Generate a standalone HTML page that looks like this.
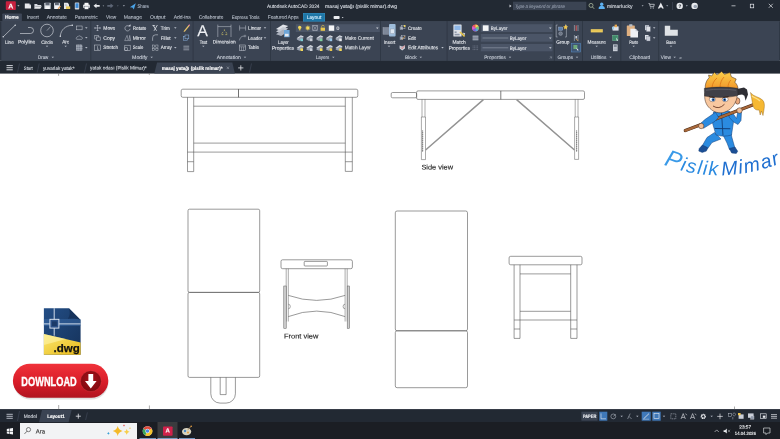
<!DOCTYPE html>
<html lang="tr"><head><meta charset="utf-8"><title>masaj yatağı (pislik mimar).dwg - Autodesk AutoCAD 2024</title>
<style>
html,body{margin:0;padding:0;background:#fff;}
body{width:780px;height:439px;position:relative;overflow:hidden;font-family:"Liberation Sans", sans-serif;}
svg.ov{position:absolute;left:0;top:0;width:780px;height:439px;overflow:visible;}
svg text{font-family:"Liberation Sans", sans-serif;}
</style></head><body>
<!--BARS-->
<svg class="ov" viewBox="0 0 780 439">
<rect x="0.00" y="0.00" width="780.00" height="21.50" fill="#222933"/>
<rect x="0.00" y="21.10" width="780.00" height="39.70" fill="#2c3440"/>
<rect x="1.30" y="21.10" width="778.00" height="39.70" fill="#3b4453"/>
<rect x="0.00" y="60.80" width="780.00" height="12.80" fill="#222933"/>
<rect x="0.00" y="409.10" width="780.00" height="13.00" fill="#222933"/>
<rect x="0.00" y="422.00" width="780.00" height="17.00" fill="#1b1e24"/>
<rect x="5.80" y="1.30" width="10.00" height="8.80" fill="#c8203f" rx="0.8"/>
<rect x="513.00" y="1.70" width="73.30" height="8.40" fill="#3b4453"/>
<rect x="2.30" y="13.40" width="19.60" height="8.00" fill="#3e4757" rx="0.8"/>
<rect x="303.00" y="13.00" width="22.00" height="8.50" fill="#3a94c4"/>
<rect x="303.40" y="13.40" width="21.20" height="7.90" fill="#1e76a6"/>
<rect x="333.60" y="15.90" width="6.00" height="3.20" fill="#e8eaee" rx="0.8"/>
<rect x="90.50" y="21.00" width="0.70" height="40.00" fill="#2c3440"/>
<rect x="192.70" y="21.00" width="0.70" height="40.00" fill="#2c3440"/>
<rect x="270.00" y="21.00" width="0.70" height="40.00" fill="#2c3440"/>
<rect x="380.00" y="21.00" width="0.70" height="40.00" fill="#2c3440"/>
<rect x="446.70" y="21.00" width="0.70" height="40.00" fill="#2c3440"/>
<rect x="553.90" y="21.00" width="0.70" height="40.00" fill="#2c3440"/>
<rect x="582.20" y="21.00" width="0.70" height="40.00" fill="#2c3440"/>
<rect x="620.50" y="21.00" width="0.70" height="40.00" fill="#2c3440"/>
<rect x="658.40" y="21.00" width="0.70" height="40.00" fill="#2c3440"/>
<rect x="295.80" y="24.20" width="84.00" height="7.80" fill="#4b5567"/>
<rect x="328.80" y="25.40" width="5.40" height="5.40" fill="#f4f5f7"/>
<rect x="480.80" y="24.20" width="71.70" height="7.80" fill="#4b5567"/>
<rect x="482.80" y="25.30" width="5.80" height="5.60" fill="#f4f5f7"/>
<rect x="480.80" y="34.00" width="71.70" height="7.70" fill="#4b5567"/>
<rect x="480.80" y="44.00" width="71.70" height="7.30" fill="#4b5567"/>
<rect x="581.40" y="411.70" width="16.20" height="9.00" fill="#3b4453"/>
<rect x="599.30" y="411.70" width="8.00" height="9.00" fill="#3f78b8"/>
<rect x="641.70" y="411.70" width="9.00" height="9.00" fill="#3f78b8"/>
<rect x="652.30" y="411.70" width="8.40" height="9.00" fill="#3f78b8"/>
<rect x="20.00" y="423.00" width="117.00" height="16.00" fill="#f2f3f5"/>
<rect x="157.50" y="422.00" width="20.00" height="17.00" fill="#3a3b3e"/>
<rect x="163.00" y="426.40" width="9.60" height="9.40" fill="#d0214a" rx="0.8"/>
<rect x="139.50" y="438.20" width="16.50" height="0.80" fill="#8ab4e8"/>
<rect x="157.50" y="438.20" width="20.00" height="0.80" fill="#8ab4e8"/>
<rect x="179.00" y="438.20" width="16.00" height="0.80" fill="#8ab4e8"/>
</svg>
<svg class="ov" viewBox="0 0 780 439">
<path d="M17.3 5.2h2.2l-1.1 1.3z" fill="#cfd3da"/>
<path d="M24.8 3.4h4.4l1.800 1.800v3.200h-6.200z" fill="#e6e8ec"/><path d="M29.200 3.400v1.800h1.800" fill="#aab0bc"/>
<path d="M34.400 4h2.600l.8.900h3.400v1h-5.200l-1.600 2.600z" fill="#d8dbe2"/><path d="M35.600 6.200h6.200l-1.500 2.600h-6.200z" fill="#e6e8ec"/>
<rect x="44.300" y="2.800" width="6.400" height="6.200" rx=".5" fill="#cfd4dc"/><rect x="45.500" y="2.800" width="4" height="2.400" fill="#3a4352" opacity=".75"/><rect x="45.300" y="6.200" width="4.400" height="2.800" fill="#f4f5f7"/>
<rect x="54" y="2.800" width="6" height="6.200" rx=".5" fill="#cfd4dc"/><rect x="55" y="2.800" width="3.800" height="2.200" fill="#3a4352" opacity=".75"/><rect x="55" y="6" width="4" height="3" fill="#f4f5f7"/><path d="M58 8.800l2.600-2.600" stroke="#e89a4a" stroke-width="1.100"/>
<path d="M64 2.800h3.600l1.400 1.400v4.800h-5z" fill="#e6e8ec"/><rect x="66" y="6.400" width="4.200" height="2.600" fill="#e8c85a"/><path d="M64.800 4.400h2M64.800 5.600h2.600" stroke="#8f98a8" stroke-width=".4"/>
<rect x="74.800" y="2.400" width="4.400" height="7" rx=".7" fill="#cfd4dc"/><rect x="75.500" y="3.300" width="3" height="4.600" fill="#3a8ad8"/>
<rect x="83.200" y="4.600" width="6.600" height="3.400" rx=".7" fill="#e6e8ec"/><rect x="84.500" y="2.800" width="4" height="2.200" fill="#f4f5f7"/><rect x="84.500" y="6.600" width="4" height="2.600" fill="#f4f5f7" stroke="#3a4352" stroke-width=".3"/>
<path d="M93.5 5.8l3-2.2v1.4h3.2v1.8h-3.2v1.4z" fill="#e8eaee"/>
<path d="M102.6 5.4h1.6l-.8 1z" fill="#aab0bb"/>
<path d="M113.5 5.8l-3-2.2v1.4h-3.2v1.8h3.2v1.4z" fill="#5d6676"/>
<path d="M117 5.4h1.6l-.8 1z" fill="#6d7686"/>
<path d="M122.8 5.2h2.2l-1.1 1.3z" fill="#aab0bb"/>
<path d="M129.8 7.2l6-4-2 6.2-1.4-1.9z" fill="#4aa3e8"/>
<path d="M509.5 4.6l2 1.4-2 1.4z" fill="#cfd3da"/>
<circle cx="591" cy="5.4" r="2" fill="none" stroke="#b9c7a8" stroke-width="0.7"/><path d="M592.4 6.9l1.8 1.9" stroke="#b9c7a8" stroke-width="0.8"/>
<circle cx="601.7" cy="4.2" r="1.7" fill="#5db0f0"/><path d="M598.6 9c0-2.6 1.3-3.2 3.1-3.2s3.1.6 3.1 3.2z" fill="#5db0f0"/>
<path d="M641.6 5.2h2l-1 1.2z" fill="#aab0bb"/>
<path d="M648.5 3.5h1l.8 3.2h3.4l.6-2.4h-4.4" fill="none" stroke="#dfe2e8" stroke-width="0.7"/><circle cx="650.8" cy="8" r=".6" fill="#dfe2e8"/><circle cx="653.3" cy="8" r=".6" fill="#dfe2e8"/>
<path d="M660.8 2.6l3 6h-1.6l-.5-1.2h-1.8l-.5 1.2h-1.6z" fill="#e8eaee"/>
<path d="M666.2 5.2h2l-1 1.2z" fill="#aab0bb"/>
<path d="M672.5 2v8" stroke="#4a5364" stroke-width="0.5"/>
<circle cx="679.7" cy="5.9" r="3.2" fill="#e8eaee"/>
<path d="M685.8 5.2h2l-1 1.2z" fill="#aab0bb"/>
<circle cx="694.6" cy="5.9" r="3.2" fill="#e8eaee"/><circle cx="695.3" cy="6.5" r="1.8" fill="#9aa3b2"/>
<path d="M731.5 5.8h4" stroke="#e8eaee" stroke-width="0.7"/>
<rect x="750.3" y="4.2" width="3.4" height="3.6" fill="none" stroke="#e8eaee" stroke-width="0.7"/>
<path d="M768.8 3.8l4 4m0-4l-4 4" stroke="#e8eaee" stroke-width="0.7"/>
<path d="M341.700 17.100h1.900l-.950 1.150z" fill="#cfd3da"/>
<path d="M51.55 56.71h2.50l-1.25 1.38z" fill="#b8bec9"/>
<path d="M150.45 56.71h2.50l-1.25 1.38z" fill="#b8bec9"/>
<path d="M243.75 56.71h2.50l-1.25 1.38z" fill="#b8bec9"/>
<path d="M332.05 56.71h2.50l-1.25 1.38z" fill="#b8bec9"/>
<path d="M419.55 56.71h2.50l-1.25 1.38z" fill="#b8bec9"/>
<path d="M508.75 56.71h2.50l-1.25 1.38z" fill="#b8bec9"/>
<path d="M575.75 56.71h2.50l-1.25 1.38z" fill="#b8bec9"/>
<path d="M609.25 56.71h2.50l-1.25 1.38z" fill="#b8bec9"/>
<path d="M673.45 56.71h2.50l-1.25 1.38z" fill="#b8bec9"/>
<path d="M549.8 58.6l1.8-1.8m0 1.8v-1.8h-1.8" stroke="#aab0bb" stroke-width="0.4" fill="none"/>
<path d="M3.2 36.8L15.2 25.2" stroke="#dfe3ea" stroke-width="0.6"/><circle cx="3.2" cy="36.8" r=".7" fill="#dfe3ea"/><circle cx="15.2" cy="25.2" r=".7" fill="#dfe3ea"/>
<path d="M20 33.5h10.5a3 3 0 0 0 0-6h-2.5" stroke="#dfe3ea" stroke-width="0.6" fill="none"/>
<circle cx="47" cy="30.5" r="6.3" stroke="#dfe3ea" stroke-width="0.6" fill="none"/><path d="M47 30.5l3.5-3.8" stroke="#dfe3ea" stroke-width="0.5"/>
<path d="M45.75 45.71h2.50l-1.25 1.38z" fill="#b8bec9"/>
<path d="M60.3 36.2c.6-6.5 5-10.5 12-11" stroke="#dfe3ea" stroke-width="0.6" fill="none"/><circle cx="60.3" cy="36.2" r=".7" fill="#dfe3ea"/><circle cx="72.3" cy="25.2" r=".7" fill="#dfe3ea"/>
<path d="M64.45 45.71h2.50l-1.25 1.38z" fill="#b8bec9"/>
<rect x="76.5" y="26" width="5.6" height="3.8" stroke="#c9ced8" stroke-width="0.5" fill="none"/>
<path d="M85.05 27.31h2.50l-1.25 1.38z" fill="#b8bec9"/>
<path d="M76.6 39.3a1.6 1.6 0 0 1 1.2-2.6 1.8 1.8 0 0 1 3.2.2 1.3 1.3 0 0 1 .8 2.4z" stroke="#c9ced8" stroke-width="0.5" fill="none"/>
<path d="M85.05 37.11h2.50l-1.25 1.38z" fill="#b8bec9"/>
<rect x="76.7" y="45" width="5.2" height="5.2" stroke="#c9ced8" stroke-width="0.5" fill="#6d7686"/><path d="M76 46.6h6.6M76 48.6h6.6M78.2 44.4v6.4M80.4 44.4v6.4" stroke="#c9ced8" stroke-width="0.35"/>
<path d="M85.05 47.11h2.50l-1.25 1.38z" fill="#b8bec9"/>
<path d="M97.5 25.0v6M94.5 28.0h6M96.5 26.0l1-1 1 1M96.5 30.0l1 1 1-1M95.5 27.0l-1 1 1 1M99.5 27.0l1 1-1 1" stroke="#c9ced8" stroke-width="0.55" fill="none"/>
<rect x="94.8" y="35.4" width="3.6" height="3.6" stroke="#c9ced8" stroke-width="0.5" fill="none"/><rect x="96.6" y="37" width="3.6" height="3.6" stroke="#c9ced8" stroke-width="0.5" fill="#3b4453"/>
<rect x="94.6" y="45" width="5.8" height="5.6" stroke="#c9ced8" stroke-width="0.5" fill="none"/><path d="M97.5 46.2v3.4l1.6-.6" stroke="#c9ced8" stroke-width="0.5" fill="none"/>
<path d="M129.8 27.0a2.6 2.6 0 1 0 .3 1.8" stroke="#c9ced8" stroke-width="0.6" fill="none"/><path d="M128.5 25.2l1.8 1.6 .6-2.2z" fill="#c9ced8"/>
<path d="M124.7 40.6l2.4-5.2 1.2 5.2zM128.9 40.6l.8-5.2 1 5.2z" stroke="#c9ced8" stroke-width="0.45" fill="none"/>
<rect x="124.8" y="45.2" width="5.4" height="5.2" stroke="#c9ced8" stroke-width="0.5" fill="none"/><rect x="124.8" y="47.8" width="2.8" height="2.6" stroke="#c9ced8" stroke-width="0.5" fill="none"/>
<path d="M153 25.2l3.6 5.6M157.4 25l-3.4 5.8M152.6 25.4l2.6.4" stroke="#e0e3ea" stroke-width="0.8" fill="none"/>
<path d="M174.05 27.31h2.50l-1.25 1.38z" fill="#b8bec9"/>
<path d="M152.6 40.8v-3a3 3 0 0 1 3-3h2.4" stroke="#c9ced8" stroke-width="0.6" fill="none"/>
<path d="M174.05 37.31h2.50l-1.25 1.38z" fill="#b8bec9"/>
<g stroke="#c9ced8" stroke-width="0.45" fill="none"><rect x="152.4" y="45" width="2.2" height="2.2"/><rect x="155.8" y="45" width="2.2" height="2.2"/><rect x="152.4" y="48.4" width="2.2" height="2.2"/><rect x="155.8" y="48.4" width="2.2" height="2.2"/></g>
<path d="M174.05 47.11h2.50l-1.25 1.38z" fill="#b8bec9"/>
<path d="M184 30.8l4.6-5.8 1 .8-4.6 5.8-1.4.4z" fill="#e9c46a"/><path d="M188.2 25.4l1-1.2 1 .8-1 1.2z" fill="#e07a9a"/>
<rect x="183.6" y="36.4" width="3.8" height="3.8" stroke="#8fb8e8" stroke-width="0.5" fill="none"/><rect x="185" y="35" width="3.8" height="3.8" stroke="#8fb8e8" stroke-width="0.5" fill="#3b4453"/>
<path d="M183.4 46.2h5.8M183.4 48h5.8M183.4 49.8h5.8" stroke="#c9ced8" stroke-width="0.6"/>
<path d="M202.05 45.71h2.50l-1.25 1.38z" fill="#b8bec9"/>
<path d="M217.8 24.6v12.4M231 24.6v12.4M217.8 26.6h13.2" stroke="#c9ced8" stroke-width="0.5" fill="none"/><path d="M221.6 33.4l1.6-1.2M224.4 31v-1.6M227.2 33.4l-1.6-1.2M221.6 34.6h1.8M225.4 34.6h1.8" stroke="#e6d96a" stroke-width="0.6"/>
<path d="M239.6 25.4v5.2M245.6 25.4v5.2M239.6 28h6" stroke="#c9ced8" stroke-width="0.5" fill="none"/>
<path d="M263.75 27.31h2.50l-1.25 1.38z" fill="#b8bec9"/>
<path d="M239.4 40.4c1-3.6 2.6-4.4 5-4.2" stroke="#c9ced8" stroke-width="0.5" fill="none"/><circle cx="245" cy="36" r=".9" fill="none" stroke="#c9ced8" stroke-width="0.4"/>
<path d="M263.75 37.31h2.50l-1.25 1.38z" fill="#b8bec9"/>
<rect x="239.4" y="45" width="6.2" height="5.6" stroke="#c9ced8" stroke-width="0.5" fill="none"/><path d="M239.4 46.8h6.2M241.5 46.8v3.8M243.5 46.8v3.8" stroke="#c9ced8" stroke-width="0.4"/>
<g><path d="M276 29l7-4.6 5.2 1.6-7 4.8z" fill="#dfe2e8"/><path d="M276 31.6l7-4.6 5.2 1.6-7 4.8z" fill="#c3c8d2"/><path d="M276 34.2l7-4.6 5.2 1.6-7 4.8z" fill="#aab0bc"/><rect x="284" y="30" width="5.6" height="7.2" fill="#6ea6d8"/><rect x="285" y="33.8" width="3.6" height="2.6" fill="#e8eaee"/></g>
<circle cx="299.7" cy="27.4" r="1.7" fill="#f2d85c"/><rect x="298.9" y="28.8" width="1.6" height="1.6" fill="#d8c050"/>
<circle cx="307.8" cy="28" r="1.7" fill="#f2d85c"/><path d="M307.8 25.2v5.6M305 28h5.6M305.8 26l4 4M309.8 26l-4 4" stroke="#f2d85c" stroke-width="0.4"/>
<rect x="312.8" y="25.4" width="4.4" height="5.2" fill="none" stroke="#c9ced8" stroke-width="0.5"/><path d="M313 25.6l4 5M317 25.6l-4 5" stroke="#c9ced8" stroke-width="0.4"/>
<rect x="320.6" y="27.6" width="4.4" height="3.2" fill="#e9c84e"/><path d="M321.6 27.6v-1a1.3 1.3 0 0 1 2.6 0" stroke="#e9c84e" stroke-width="0.6" fill="none"/>
<path d="M376.05 27.51h2.50l-1.25 1.38z" fill="#cfd3da"/>
<path d="M296.6 38.2l4.200-3 3 1.200-4.200 3.200z" fill="#d5d9e0"/><path d="M296.6 39.6l4.200-3 3 1.200-4.200 3.200z" fill="#9aa2b0"/>
<rect x="300.4" y="38.6" width="2.600" height="2.600" fill="#7fd0d8"/>
<path d="M306.1 38.2l4.200-3 3 1.200-4.200 3.200z" fill="#d5d9e0"/><path d="M306.1 39.6l4.200-3 3 1.200-4.200 3.200z" fill="#9aa2b0"/>
<rect x="309.9" y="38.6" width="2.600" height="2.600" fill="#c9ced8"/>
<path d="M316.1 38.2l4.200-3 3 1.200-4.200 3.200z" fill="#d5d9e0"/><path d="M316.1 39.6l4.200-3 3 1.200-4.200 3.200z" fill="#9aa2b0"/>
<rect x="319.9" y="38.6" width="2.600" height="2.600" fill="#7fd0a0"/>
<path d="M325.8 38.2l4.200-3 3 1.200-4.200 3.200z" fill="#d5d9e0"/><path d="M325.8 39.6l4.200-3 3 1.200-4.200 3.200z" fill="#9aa2b0"/>
<rect x="329.6" y="38.6" width="2.600" height="2.600" fill="#9ac8ea"/>
<path d="M335.4 38.2l4.200-3 3 1.200-4.200 3.200z" fill="#d5d9e0"/><path d="M335.4 39.6l4.200-3 3 1.200-4.200 3.200z" fill="#9aa2b0"/>
<rect x="339.2" y="38.6" width="2.600" height="2.600" fill="#e8eaee"/>
<path d="M296.6 48.0l4.200-3 3 1.200-4.200 3.200z" fill="#d5d9e0"/><path d="M296.6 49.4l4.200-3 3 1.200-4.200 3.200z" fill="#9aa2b0"/>
<rect x="300.4" y="48.4" width="2.600" height="2.600" fill="#f2d85c"/>
<path d="M306.1 48.0l4.200-3 3 1.200-4.200 3.200z" fill="#d5d9e0"/><path d="M306.1 49.4l4.200-3 3 1.200-4.200 3.200z" fill="#9aa2b0"/>
<rect x="309.9" y="48.4" width="2.600" height="2.600" fill="#c9ced8"/>
<path d="M316.1 48.0l4.200-3 3 1.200-4.200 3.200z" fill="#d5d9e0"/><path d="M316.1 49.4l4.200-3 3 1.200-4.200 3.200z" fill="#9aa2b0"/>
<rect x="319.9" y="48.4" width="2.600" height="2.600" fill="#f2d85c"/>
<path d="M325.8 48.0l4.200-3 3 1.200-4.200 3.200z" fill="#d5d9e0"/><path d="M325.8 49.4l4.200-3 3 1.200-4.200 3.200z" fill="#9aa2b0"/>
<rect x="329.6" y="48.4" width="2.600" height="2.600" fill="#e9c84e"/>
<path d="M335.4 48.0l4.200-3 3 1.200-4.200 3.200z" fill="#d5d9e0"/><path d="M335.4 49.4l4.200-3 3 1.200-4.200 3.200z" fill="#9aa2b0"/>
<rect x="339.2" y="48.4" width="2.600" height="2.600" fill="#f2d85c"/>
<rect x="383" y="27.6" width="9.6" height="6.6" fill="#7d8798" stroke="#aab0bc" stroke-width="0.4"/><rect x="389" y="24" width="6.6" height="12.4" rx="1" fill="#a9c9e8" opacity="0.9"/><rect x="390.2" y="29" width="4.2" height="4.6" fill="#dfe8f2" stroke="#6d7686" stroke-width="0.3"/>
<path d="M387.75 45.71h2.50l-1.25 1.38z" fill="#b8bec9"/>
<rect x="399.8" y="26.6" width="3.2" height="3.2" fill="#8f98a8"/><rect x="401.6" y="25.4" width="3.4" height="3.4" fill="none" stroke="#c9ced8" stroke-width="0.4"/><circle cx="404.6" cy="26" r="1" fill="#f2d85c"/>
<rect x="399.8" y="36.6" width="3.2" height="3.2" fill="#8f98a8"/><rect x="401.6" y="35.4" width="3.4" height="3.4" fill="none" stroke="#c9ced8" stroke-width="0.4"/><path d="M402 39.6l3-3.6" stroke="#e9a84e" stroke-width="0.7"/>
<path d="M399.6 45.4l2.6 1.2 2.8-1.4v3.2l-2.8 2.2-2.6-2z" fill="#c9ced8"/><path d="M401 47.4l1.2 1.2 2.4-3" stroke="#e05a5a" stroke-width="0.7" fill="none"/>
<path d="M441.25 47.11h2.50l-1.25 1.38z" fill="#b8bec9"/>
<rect x="453.4" y="24.4" width="8.2" height="12.2" rx=".6" fill="#dfe2e8"/><rect x="454.4" y="25.6" width="6.2" height="4.4" fill="#8fb8e8"/><rect x="454.6" y="31.4" width="2" height="1.6" fill="#8f98a8"/><rect x="454.6" y="33.8" width="5" height="1.6" fill="#8f98a8"/><path d="M460 32l4.6 4.4" stroke="#e9c84e" stroke-width="1.6"/><path d="M462.6 32.4l2.6 1-.6 1.6z" fill="#f4f5f7"/>
<circle cx="475.5" cy="28" r="3.4" fill="#e85a5a"/><path d="M475.5 28v-3.4a3.4 3.4 0 0 1 3 1.7z" fill="#f2d85c"/><path d="M475.5 28l3-1.7a3.4 3.4 0 0 1 0 3.4z" fill="#6ad07a"/><path d="M475.5 28l3 1.7a3.4 3.4 0 0 1-3 1.7z" fill="#4ab0e8"/><path d="M475.5 28v3.4a3.4 3.4 0 0 1-3-1.7z" fill="#6a6ae8"/><path d="M475.5 28l-3 1.7a3.4 3.4 0 0 1 0-3.4z" fill="#d85ad8"/>
<path d="M549.05 27.51h2.50l-1.25 1.38z" fill="#cfd3da"/>
<path d="M482.5 38h25.8" stroke="#aab0bc" stroke-width="0.5"/>
<path d="M549.05 37.51h2.50l-1.25 1.38z" fill="#cfd3da"/>
<path d="M482.5 47.8h25.8" stroke="#aab0bc" stroke-width="0.5"/>
<path d="M549.05 47.31h2.50l-1.25 1.38z" fill="#cfd3da"/>
<rect x="472.6" y="35.2" width="5.8" height="5.4" fill="#6d7686"/><path d="M472.6 36.4h5.8M472.6 38h5.8M472.6 39.6h5.8" stroke="#c9ced8" stroke-width="0.5"/>
<path d="M472.6 46h5.8M472.6 47.8h5.8M472.6 49.6h5.8" stroke="#8f98a8" stroke-width="0.5" stroke-dasharray="1 .5"/>
<path d="M557.6 25h-1.4v12h1.4M565 25h1.4v12h-1.4" stroke="#c9ced8" stroke-width="0.5" fill="none"/><rect x="558.4" y="27" width="4.4" height="3.4" fill="#5a7fae" stroke="#c9ced8" stroke-width="0.3"/><circle cx="560.6" cy="33.6" r="1.9" fill="#6d7686" stroke="#c9ced8" stroke-width="0.3"/><path d="M565.6 24.4l.8 1.8 1.8.4-1.4 1.2.4 1.8-1.6-1-1.6 1 .4-1.8-1.4-1.2 1.8-.4z" fill="#f2c84e"/>
<path d="M574.4 25v6M578 25v6" stroke="#c9ced8" stroke-width="0.5"/><path d="M576.2 25.4v5.4" stroke="#e05a5a" stroke-width="1"/>
<path d="M574.4 35v6M578 35v6" stroke="#c9ced8" stroke-width="0.5"/><path d="M575.4 36h1.6v2.6h-1.6z" fill="#c9ced8"/><path d="M576.2 39.2l2 1.6" stroke="#e9a84e" stroke-width="0.8"/>
<rect x="571.4" y="43.2" width="9.2" height="8.8" fill="#3f5674" stroke="#5a8fc8" stroke-width="0.5"/><rect x="573.4" y="45" width="4" height="4" fill="#6ea87a"/><path d="M576 47.4l2.8 2.8-1.4.2z" fill="#f4f5f7"/>
<rect x="590.8" y="29.2" width="12" height="3.2" fill="#f2d060"/><path d="M590.8 30.8h12" stroke="#c8a840" stroke-width="0.4"/>
<path d="M595.45 45.71h2.50l-1.25 1.38z" fill="#b8bec9"/>
<rect x="612.6" y="26.4" width="6" height="4.2" fill="#dfe2e8"/><rect x="614.6" y="24.6" width="2.4" height="2.6" fill="#e9a84e"/><rect x="612" y="27" width="1.8" height="2.4" fill="#8fc8ea"/>
<rect x="612.6" y="35.2" width="5.4" height="5.4" fill="#3f8a6a" stroke="#7fc8a0" stroke-width="0.4"/><path d="M616 37.6l2.2 3-1.4.1z" fill="#f4f5f7"/>
<rect x="613" y="44.4" width="4.6" height="6.8" fill="#c9ced8"/><rect x="613.8" y="45.2" width="3" height="1.6" fill="#6d7686"/><path d="M613.8 48h3M613.8 49.4h3" stroke="#6d7686" stroke-width="0.5" stroke-dasharray=".7 .4"/>
<rect x="626.8" y="25.4" width="8" height="10.6" rx=".6" fill="#e0b080"/><rect x="629.2" y="24.2" width="3.2" height="2.2" rx=".4" fill="#b8bec8"/><path d="M630.4 28.8h5.2l2.4 2.4v6.2h-7.6z" fill="#eef0f4"/><path d="M635.6 28.8v2.4h2.4z" fill="#c3c8d2"/>
<path d="M632.45 45.71h2.50l-1.25 1.38z" fill="#b8bec9"/>
<rect x="645" y="25.2" width="4" height="5" fill="#c9ced8"/><rect x="646.4" y="26.6" width="4" height="5" fill="#dfe2e8" stroke="#6d7686" stroke-width="0.3"/>
<path d="M652.95 27.31h2.50l-1.25 1.38z" fill="#b8bec9"/>
<rect x="645" y="35" width="3.6" height="4.6" fill="#dfe2e8"/><rect x="646.6" y="36.4" width="3.6" height="4.6" fill="#c9ced8" stroke="#6d7686" stroke-width="0.3"/>
<path d="M652.95 37.31h2.50l-1.25 1.38z" fill="#b8bec9"/>
<path d="M664.8 25.8h5.4v4h7.6v6h-13z" fill="#dfe2e6"/>
<path d="M669.75 45.71h2.50l-1.25 1.38z" fill="#b8bec9"/>
<path d="M6.5 65.6h6.300M6.5 67.700h6.300M6.5 69.800h6.300" stroke="#e4e7ec" stroke-width="0.9"/>
<path d="M17.5 72.5l2-9M37.2 72.5l2-9M84.5 72.5l2-9" stroke="#4a5364" stroke-width="0.5"/>
<path d="M154.3 73.6l2.8-11.2h75.2l2.6 11.2z" fill="#3b4453"/>
<path d="M226.8 66.6l2.2 2.4m0-2.4l-2.2 2.4" stroke="#aab0bb" stroke-width="0.5"/>
<path d="M238.2 67.9h5.2m-2.6-2.6v5.2" stroke="#e8eaee" stroke-width="0.8"/>
<path d="M249.5 72.5l2-9" stroke="#4a5364" stroke-width="0.5"/>
<path d="M6.5 414.300h6.300M6.5 416.300h6.300M6.5 418.300h6.300" stroke="#c9ced8" stroke-width="0.85"/>
<path d="M17.5 421l2-10" stroke="#4a5364" stroke-width="0.5"/>
<path d="M39 422.2l3-12.2h29.6l-3 12.2z" fill="#3b4453"/>
<path d="M75.8 416.2h5m-2.5-2.5v5" stroke="#e8eaee" stroke-width="0.8"/>
<path d="M85.6 420l1.8-7.6" stroke="#4a5364" stroke-width="0.5"/>
<path d="M601 413.4v5.4h5" stroke="#e8eaee" stroke-width="0.6" fill="none"/>
<circle cx="613.3" cy="416.4" r="2.4" stroke="#c9ced8" stroke-width="0.5" fill="none"/><path d="M613.3 416.4l2.4-2" stroke="#c9ced8" stroke-width="0.5"/>
<path d="M620.45 415.71h2.50l-1.25 1.38z" fill="#b8bec9"/>
<path d="M627.6 419l2.6-5.4M629 416.4l2.6 2.6" stroke="#c9ced8" stroke-width="0.5" fill="none"/>
<path d="M636.05 415.71h2.50l-1.25 1.38z" fill="#b8bec9"/>
<path d="M643.4 419l5.6-5.4" stroke="#e8eaee" stroke-width="0.8"/><path d="M643.4 419.2h5.6" stroke="#e8eaee" stroke-width="0.4"/>
<rect x="654" y="413.6" width="5" height="5" stroke="#e8eaee" stroke-width="0.6" fill="none"/>
<path d="M662.75 415.71h2.50l-1.25 1.38z" fill="#b8bec9"/>
<rect x="670.8" y="413.8" width="5" height="5" stroke="#c9ced8" stroke-width="0.5" fill="none" stroke-dasharray="1.2 .6"/>
<path d="M681 419l2.2-5.4 2.2 5.4M681.8 417.4h2.8M685.6 413.6l1.2 1.6" stroke="#e8eaee" stroke-width="0.6" fill="none"/>
<path d="M690.4 419l2.2-5.4 2.2 5.4M691.2 417.4h2.8M695 413.6l1.2 1.6" stroke="#e8eaee" stroke-width="0.6" fill="none"/>
<circle cx="703.3" cy="416.4" r="2" stroke="#e8eaee" stroke-width="1.3" fill="none" stroke-dasharray="1 .57"/><circle cx="703.3" cy="416.4" r="1.6" stroke="#e8eaee" stroke-width="0.8" fill="none"/>
<path d="M710.45 415.71h2.50l-1.25 1.38z" fill="#b8bec9"/>
<path d="M717.2 416.4h5.6m-2.8-2.8v5.6" stroke="#e8eaee" stroke-width="0.7"/>
<rect x="728.4" y="413.6" width="3" height="3" stroke="#c9ced8" stroke-width="0.45" fill="none"/><path d="M732.8 414.4a1.4 1.4 0 1 1 0 .1M732.8 417v2.4" stroke="#c9ced8" stroke-width="0.45" fill="none"/>
<rect x="738.6" y="414.4" width="5" height="4.4" fill="#c9ced8"/><rect x="738" y="413" width="2.6" height="2.2" fill="#f2c84e"/>
<rect x="748" y="413.4" width="5.6" height="4.4" fill="#c9ced8"/><rect x="750.6" y="416" width="3.4" height="3.2" fill="#8f98a8" stroke="#e8eaee" stroke-width="0.3"/>
<rect x="760.6" y="413.8" width="5.6" height="4.8" stroke="#e8eaee" stroke-width="0.6" fill="none"/><rect x="762.8" y="415.6" width="2.6" height="2.2" fill="#e8eaee"/>
<path d="M771 414.6h6M771 416.4h6M771 418.2h6" stroke="#e8eaee" stroke-width="0.7"/>
<path d="M6.8 428.9l2.6-.4v2.5H6.8zM9.9 428.4l3.1-.5v3.1H9.9zM6.8 431.5h2.6v2.5l-2.6-.4zM9.9 431.5H13v3.1l-3.1-.5z" fill="#f4f5f7"/>
<circle cx="28.500" cy="429.600" r="2.100" stroke="#333" stroke-width="0.6" fill="none"/><path d="M27 431.200l-2.500 2.700" stroke="#333" stroke-width="0.7"/>
<path d="M117.7 426.1q0.882 4.018 4.9 4.9q-4.018 0.882 -4.9 4.9q-0.882 -4.018 -4.9 -4.9q4.018 -0.882 4.9 -4.9z" fill="#f4b928"/>
<path d="M126.7 428.90000000000003q0.522 2.3779999999999997 2.9 2.9q-2.3779999999999997 0.522 -2.9 2.9q-0.522 -2.3779999999999997 -2.9 -2.9q2.3779999999999997 -0.522 2.9 -2.9z" fill="#f7cf4a"/>
<path d="M108.4 432.09999999999997q0.23399999999999999 1.066 1.3 1.3q-1.066 0.23399999999999999 -1.3 1.3q-0.23399999999999999 -1.066 -1.3 -1.3q1.066 -0.23399999999999999 1.3 -1.3z" fill="#3aa0d8"/>
<path d="M124 424.3q0.216 0.9839999999999999 1.2 1.2q-0.9839999999999999 0.216 -1.2 1.2q-0.216 -0.9839999999999999 -1.2 -1.2q0.9839999999999999 -0.216 1.2 -1.2z" fill="#e86a6a"/>
<path d="M130 427.3q0.162 0.738 0.9 0.9q-0.738 0.162 -0.9 0.9q-0.162 -0.738 -0.9 -0.9q0.738 -0.162 0.9 -0.9z" fill="#f4b928"/>
<circle cx="147.5" cy="431" r="4.8" fill="#e8eaee"/><path d="M147.5 431l-4.2-2.3a4.8 4.8 0 0 1 8.4 0z" fill="#e04a3a"/><path d="M147.5 431l-4.2-2.3a4.8 4.8 0 0 0 2 6.7z" fill="#3aa858"/><path d="M147.5 431l4.2-2.3a4.8 4.8 0 0 1-6.4 6.7z" fill="#f4c430"/><circle cx="147.5" cy="431" r="2.2" fill="#f4f5f7"/><circle cx="147.5" cy="431" r="1.7" fill="#4a8ae8"/>
<ellipse cx="186.6" cy="431.6" rx="4.6" ry="3.6" fill="#d8d4c0"/><circle cx="185" cy="431" r="1.2" fill="#4a8ac8"/><circle cx="188" cy="432.6" r="1" fill="#e8a040"/><path d="M187.6 430.2l3.4-3.8" stroke="#b89060" stroke-width="0.8"/><circle cx="191.2" cy="426.2" r=".8" fill="#e8a040"/>
<path d="M714.6 432l2.1-2.1 2.1 2.1" stroke="#e8eaee" stroke-width="0.6" fill="none"/>
<path d="M723.6 430.2h1.4l1.8-1.6v5l-1.8-1.6h-1.4z" fill="#e8eaee"/><path d="M728 429.8l2 2.4m0-2.4l-2 2.4" stroke="#e8eaee" stroke-width="0.4"/>
<path d="M763.6 428h6.4v5h-2.4l-1.6 1.6v-1.6h-2.4z" stroke="#f4f5f7" stroke-width="0.6" fill="none"/>
<g><rect x="181.20" y="89.20" width="176.60" height="8.10" rx="1.6" stroke="#555" stroke-width="0.6" fill="none"/><path d="M238.5 89.2v8.1" stroke="#333" stroke-width="0.7" fill="none"/><path d="M187.5 97.3v74.3h6.2v-74.3M345.3 97.3v74.1h7v-74.1" stroke="#555" stroke-width="0.6" fill="none"/><path d="M193.7 106.2h151.6M193.7 143.1h151.6M187.5 152.1h164.8M187.5 161.7h6.2M345.3 161.7h7" stroke="#555" stroke-width="0.6" fill="none"/><rect x="391.20" y="92.50" width="25.40" height="5.30" rx="1.4" stroke="#555" stroke-width="0.6" fill="none"/><rect x="416.60" y="90.90" width="167.90" height="8.50" rx="1.4" stroke="#555" stroke-width="0.6" fill="none"/><path d="M500.8 90.9v8.5" stroke="#444" stroke-width="0.7" fill="none"/><path d="M422 99.4v17.6M425 99.4v17.6M421.4 117v42.6h4.1v-42.6zM575.2 99.4v17.6M578 99.4v17.6M574.6 117v42.4h4v-42.4z" stroke="#555" stroke-width="0.5" fill="none"/><path d="M422.6 130v22M576.6 130v22" stroke="#555" stroke-width="0.5" fill="none"/><path d="M422.7 132v20M576.7 132v20" stroke="#444" stroke-width="0.7" stroke-dasharray="0.7 1.3" fill="none"/><path d="M483.4 99.6L425.6 150M516.6 99.6L574.5 150" stroke="#939393" stroke-width="1.5" fill="none"/><rect x="188.00" y="209.20" width="71.70" height="83.20" rx="1.5" stroke="#555" stroke-width="0.6" fill="none"/><rect x="188.00" y="292.40" width="71.70" height="85.00" rx="1.5" stroke="#555" stroke-width="0.6" fill="none"/><path d="M210.8 377.4v16.4a9.3 9.3 0 0 0 9.3 9.3h6a9.3 9.3 0 0 0 9.3-9.3v-16.4M220.2 377.4v17.2h5.9v-17.2" stroke="#555" stroke-width="0.6" fill="none"/><rect x="281.00" y="259.80" width="71.40" height="8.90" rx="1.6" stroke="#555" stroke-width="0.6" fill="none"/><rect x="304.20" y="261.40" width="23.20" height="4.60" rx="0.8" stroke="#555" stroke-width="0.6" fill="none"/><path d="M286.2 268.7v52.8M288.3 268.7v52.8M345.1 268.7v52.8M347.2 268.7v52.8" stroke="#555" stroke-width="0.5" fill="none"/><rect x="283.8" y="286" width="2.4" height="42.3" fill="#cfcfcf" stroke="#5a5a5a" stroke-width="0.5"/><rect x="347.2" y="286" width="2.4" height="42.3" fill="#cfcfcf" stroke="#5a5a5a" stroke-width="0.5"/><path d="M288.3 295.4Q316.7 305.4 345.1 295.4M288.3 316.6Q316.7 305.6 345.1 316.6" stroke="#555" stroke-width="0.6" fill="none"/><path d="M288.3 304.2a2 2.3 0 0 1 0 4.600M345.1 304.2a2 2.3 0 0 0 0 4.600" stroke="#555" stroke-width="0.5" fill="none"/><rect x="395.30" y="211.00" width="72.20" height="119.80" rx="1.8" stroke="#555" stroke-width="0.6" fill="none"/><rect x="395.30" y="330.80" width="72.20" height="56.90" rx="1.8" stroke="#555" stroke-width="0.6" fill="none"/><rect x="509.10" y="256.30" width="72.90" height="8.50" rx="1.6" stroke="#555" stroke-width="0.6" fill="none"/><path d="M514.1 264.8v73.6h5.9v-73.6M570.7 264.8v73.6h6.3v-73.6" stroke="#555" stroke-width="0.6" fill="none"/><path d="M520 273.9h50.7M520 311.3h50.7M514.1 320h62.9M514.1 329h5.9M570.7 329h6.3" stroke="#555" stroke-width="0.6" fill="none"/></g>
<path d="M58.7 405v4.5M149.4 405.5v4M58.6 73.500v2.400M149.3 73.500v1.400M734.500 406.500v3" stroke="#555" stroke-width="0.5"/>
<g><defs><linearGradient id="hair" x1="0" y1="0" x2="0" y2="1"><stop offset="0" stop-color="#fbd04a"/><stop offset="1" stop-color="#f2952a"/></linearGradient><linearGradient id="btn" x1="0" y1="0" x2="0" y2="1"><stop offset="0" stop-color="#f0323a"/><stop offset="0.55" stop-color="#d81c28"/><stop offset="1" stop-color="#b01420"/></linearGradient><linearGradient id="dwgb" x1="0" y1="0" x2="1" y2="1"><stop offset="0" stop-color="#234e86"/><stop offset="1" stop-color="#15325a"/></linearGradient><linearGradient id="dwgy" x1="0" y1="0" x2="1" y2="1"><stop offset="0" stop-color="#fbe870"/><stop offset="1" stop-color="#e8b818"/></linearGradient><radialGradient id="circ" cx="0.5" cy="0.4" r="0.6"><stop offset="0" stop-color="#a81018"/><stop offset="1" stop-color="#7e0a10"/></radialGradient></defs><path d="M714.500 132.500l-7.500 5-5.500 9.500 5.500 2.500 5-7 9-3.500zM722.500 134l4.500 9 2.500 6.500 5.500-1.200-3-10.500-1.500-6.500z" fill="#2b8be0" stroke="#143f78" stroke-width="0.5" stroke-linejoin="round"/><path d="M699.200 148.600l3.200-3.500 5.200 2.500-1.200 3.500-4.200 1.300-3.400-1.300zM729.300 148.500l5.600-1.500 2.800 4.200-1.400 2.200-4.600-.4z" fill="#1b4f96" stroke="#143f78" stroke-width="0.5" stroke-linejoin="round"/><path d="M713.500 112c5-2 12-2 16.500-.5l4 7-2.500 16.500c-5 1.500-11 1.500-15.500 0l-3.500-12z" fill="#2b8be0" stroke="#143f78" stroke-width="0.5" stroke-linejoin="round"/><path d="M721.500 112.500l1.500 23" stroke="#143f78" stroke-width="0.900"/><path d="M714.800 128.500l15.500.3" stroke="#143f78" stroke-width="1.100"/><path d="M729 112.500l4 1 3.500 5 1.500-7.500 3.500.5-.5 9-3 4-4.500-2.500-4.500-5z" fill="#2b8be0" stroke="#143f78" stroke-width="0.5" stroke-linejoin="round"/><path d="M685.300 130.600L752.600 105" stroke="#4a2a14" stroke-width="3.200" stroke-linecap="round"/><path d="M685.300 130.600L752.600 105" stroke="#a8683a" stroke-width="2.200" stroke-linecap="round"/><path d="M715.500 112.300l-11 7.500-4.500 4.500 3.500 4 11.500-7 3.500-4z" fill="#2b8be0" stroke="#143f78" stroke-width="0.5" stroke-linejoin="round"/><circle cx="701.200" cy="126" r="2.700" fill="#f3bd94" stroke="#3a2418" stroke-width="0.5" stroke-linejoin="round"/><circle cx="739.500" cy="110.500" r="2.700" fill="#f3bd94" stroke="#3a2418" stroke-width="0.5" stroke-linejoin="round"/><path d="M750.500 92.500c3 4.500 9 4 12.500 8 2.500 3.500 1 8.500 0 15l-1.600-4.500-1.200 4-1.100-5c-3.500.5-5.500-1.500-6.300-5-1-4.500-1.100-8-2.300-12.500z" fill="#f6b832" stroke="#8a5a10" stroke-width="0.400"/><path d="M752 96c2.500 2 5.500 2.500 8 5" stroke="#fde08a" stroke-width="1.200" fill="none"/><ellipse cx="737.600" cy="101" rx="2.300" ry="3.200" fill="#eaa87c" stroke="#3a2418" stroke-width="0.5" stroke-linejoin="round"/><path d="M705 93c-1 6 .5 11.500 5 15.500 4 3.800 9 5.200 14 3.800 6.500-2 11-7 13-14.500l-.3-5h-31.500z" fill="#f8c8a0" stroke="#3a2418" stroke-width="0.5" stroke-linejoin="round"/><path d="M705.500 89.500c-.8-4 .300-8.500 3.600-11.700l-.5-2.800 3 1 2.800-3.800 2.600 2.800 4.600-3.500 2.900 2.800 5.500-1.800 1.400 4.300 4.800 2.200-1.300 3.200c2.300 2.400 3.200 4.300 3 7.300z" fill="url(#hair)" stroke="#3a2418" stroke-width="0.5" stroke-linejoin="round"/><path d="M712 87.500c.5-4 2-7 5-9.500M720 87.500c0-4 1.500-8 4-10.500M728 87.500c0-3 1-5.500 2.800-7.500" stroke="#e07a18" stroke-width="0.900" fill="none"/><path d="M737 89l7-1.600 3 2.200 1 5-2.400 6.200-1.200-5-2.300-1.300-5 .8z" fill="#2e2e34"/><path d="M704.300 88.300c10.500-1.600 22.500-1.600 33.400 0l.2 7.300c-10.500 2.300-22.500 2.300-33.300.5z" fill="#404048" stroke="#1e1e22" stroke-width="0.400"/><path d="M706 90.200c10-1.300 20-1.300 30 0" stroke="#62626c" stroke-width="0.800" fill="none"/><ellipse cx="712.300" cy="99.300" rx="3" ry="2.400" fill="#fff" stroke="#3a2418" stroke-width="0.400"/><ellipse cx="725.200" cy="99.300" rx="3" ry="2.400" fill="#fff" stroke="#3a2418" stroke-width="0.400"/><circle cx="713.200" cy="99.700" r="1.600" fill="#3a78c8"/><circle cx="724.600" cy="99.700" r="1.600" fill="#3a78c8"/><circle cx="713.200" cy="99.700" r=".7" fill="#111"/><circle cx="724.600" cy="99.700" r=".7" fill="#111"/><path d="M708.800 96.600l6 1.200M728.600 96.600l-6 1.200" stroke="#3a2418" stroke-width="1"/><path d="M713 106q6 4 11.500 -1.800" stroke="#5a2a18" stroke-width="0.800" fill="none"/></g>
<path id="lp" d="M663.500 164.500Q718 187 783 162.500" fill="none"/>
<g><path d="M43.900 308.200h25l11.700 11.700v34.800h-36.700z" fill="url(#dwgb)"/><path d="M43.900 319h36.700v7h-36.700z" fill="#3f6fae" opacity="0.450"/><path d="M43.900 334.100L80.600 342.400v12.300h-36.700z" fill="url(#dwgy)"/><path d="M43.900 334.100L66 339.100l-22.100 6z" fill="#fff6b0" opacity="0.550"/><path d="M68.900 308.200c1.500 4 1 8-1 10.500 4 -1 8.500-.5 12.700 1.200z" fill="#16335c"/><path d="M54.200 308.200v27.500M43.900 323.900h36.700" stroke="#e4ecf6" stroke-width="0.900"/><rect x="49.900" y="319.300" width="9" height="8.800" fill="#2a4f86" stroke="#e4ecf6" stroke-width="0.900"/><rect x="52" y="321.400" width="4.800" height="4.600" fill="#1b3a68"/></g>
<g><rect x="13.500" y="365.500" width="95" height="34" rx="17" fill="#000" opacity="0.120"/><rect x="12.900" y="363.800" width="95.400" height="34" rx="17" fill="url(#btn)"/><circle cx="90.900" cy="381.200" r="10.400" fill="url(#circ)"/><circle cx="90.900" cy="381.200" r="10.400" fill="none" stroke="#e8464e" stroke-width="0.500" opacity="0.600"/><path d="M88.400 374h4.800v7h3.400l-5.800 7.600-5.800-7.600h3.400z" fill="#fff"/></g>
</svg>
<svg class="ov" style="will-change:transform" viewBox="0 0 780 439">
<text transform="translate(8.20 8.42) rotate(0.03)" font-size="7" fill="#fff" stroke="#fff" stroke-width="0.12" font-weight="bold">A</text>
<text transform="translate(137.50 8.01) rotate(0.03)" font-size="5.3" fill="#a8b2c0" stroke="#a8b2c0" stroke-width="0.12" textLength="11.3" lengthAdjust="spacingAndGlyphs">Share</text>
<text transform="translate(267.00 7.90) rotate(0.03)" font-size="5" fill="#d5d9e0" stroke="#d5d9e0" stroke-width="0.12" textLength="52.5" lengthAdjust="spacingAndGlyphs">Autodesk AutoCAD 2024</text>
<text transform="translate(325.00 7.90) rotate(0.03)" font-size="5" fill="#d5d9e0" stroke="#d5d9e0" stroke-width="0.12" textLength="72" lengthAdjust="spacingAndGlyphs">masaj yatağı (pislik mimar).dwg</text>
<text transform="translate(515.00 7.73) rotate(0.03)" font-size="4.8" fill="#8f98a8" stroke="#8f98a8" stroke-width="0.12" font-style="italic" textLength="50" lengthAdjust="spacingAndGlyphs">Type a keyword or phrase</text>
<text transform="translate(607.00 7.90) rotate(0.03)" font-size="5.0" fill="#d5d9e0" stroke="#d5d9e0" stroke-width="0.12" textLength="25.5" lengthAdjust="spacingAndGlyphs">mimarlucky</text>
<text transform="translate(678.50 7.66) rotate(0.03)" font-size="4.6" fill="#222933" stroke="#222933" stroke-width="0.12" font-weight="bold">?</text>
<text transform="translate(5.00 18.80) rotate(0.03)" font-size="5.0" fill="#fff" stroke="#fff" stroke-width="0.12" font-weight="bold" textLength="13.7" lengthAdjust="spacingAndGlyphs">Home</text>
<text transform="translate(27.00 18.80) rotate(0.03)" font-size="5.0" fill="#b4bbc6" stroke="#b4bbc6" stroke-width="0.12" textLength="11.7" lengthAdjust="spacingAndGlyphs">Insert</text>
<text transform="translate(46.70 18.80) rotate(0.03)" font-size="5.0" fill="#b4bbc6" stroke="#b4bbc6" stroke-width="0.12" textLength="20.0" lengthAdjust="spacingAndGlyphs">Annotate</text>
<text transform="translate(74.70 18.80) rotate(0.03)" font-size="5.0" fill="#b4bbc6" stroke="#b4bbc6" stroke-width="0.12" textLength="22.8" lengthAdjust="spacingAndGlyphs">Parametric</text>
<text transform="translate(106.00 18.80) rotate(0.03)" font-size="5.0" fill="#b4bbc6" stroke="#b4bbc6" stroke-width="0.12" textLength="10.2" lengthAdjust="spacingAndGlyphs">View</text>
<text transform="translate(123.70 18.80) rotate(0.03)" font-size="5.0" fill="#b4bbc6" stroke="#b4bbc6" stroke-width="0.12" textLength="18.3" lengthAdjust="spacingAndGlyphs">Manage</text>
<text transform="translate(150.00 18.80) rotate(0.03)" font-size="5.0" fill="#b4bbc6" stroke="#b4bbc6" stroke-width="0.12" textLength="15.3" lengthAdjust="spacingAndGlyphs">Output</text>
<text transform="translate(173.70 18.80) rotate(0.03)" font-size="5.0" fill="#b4bbc6" stroke="#b4bbc6" stroke-width="0.12" textLength="17.1" lengthAdjust="spacingAndGlyphs">Add-ins</text>
<text transform="translate(198.80 18.80) rotate(0.03)" font-size="5.0" fill="#b4bbc6" stroke="#b4bbc6" stroke-width="0.12" textLength="24.5" lengthAdjust="spacingAndGlyphs">Collaborate</text>
<text transform="translate(231.70 18.80) rotate(0.03)" font-size="5.0" fill="#b4bbc6" stroke="#b4bbc6" stroke-width="0.12" textLength="27.9" lengthAdjust="spacingAndGlyphs">Express Tools</text>
<text transform="translate(267.80 18.80) rotate(0.03)" font-size="5.0" fill="#b4bbc6" stroke="#b4bbc6" stroke-width="0.12" textLength="30.9" lengthAdjust="spacingAndGlyphs">Featured Apps</text>
<text transform="translate(306.70 18.90) rotate(0.03)" font-size="5.0" fill="#d4eeff" stroke="#d4eeff" stroke-width="0.12" textLength="14.6" lengthAdjust="spacingAndGlyphs">Layout</text>
<text transform="translate(38.00 59.00) rotate(0.03)" font-size="5.0" fill="#c3c9d3" stroke="#c3c9d3" stroke-width="0.12" textLength="10.3" lengthAdjust="spacingAndGlyphs">Draw</text>
<text transform="translate(132.00 59.00) rotate(0.03)" font-size="5.0" fill="#c3c9d3" stroke="#c3c9d3" stroke-width="0.12" textLength="15.5" lengthAdjust="spacingAndGlyphs">Modify</text>
<text transform="translate(216.70 59.00) rotate(0.03)" font-size="5.0" fill="#c3c9d3" stroke="#c3c9d3" stroke-width="0.12" textLength="24.1" lengthAdjust="spacingAndGlyphs">Annotation</text>
<text transform="translate(315.80 59.00) rotate(0.03)" font-size="5.0" fill="#c3c9d3" stroke="#c3c9d3" stroke-width="0.12" textLength="13.4" lengthAdjust="spacingAndGlyphs">Layers</text>
<text transform="translate(405.00 59.00) rotate(0.03)" font-size="5.0" fill="#c3c9d3" stroke="#c3c9d3" stroke-width="0.12" textLength="11.7" lengthAdjust="spacingAndGlyphs">Block</text>
<text transform="translate(484.20 59.00) rotate(0.03)" font-size="5.0" fill="#c3c9d3" stroke="#c3c9d3" stroke-width="0.12" textLength="21.6" lengthAdjust="spacingAndGlyphs">Properties</text>
<text transform="translate(557.50 59.00) rotate(0.03)" font-size="5.0" fill="#c3c9d3" stroke="#c3c9d3" stroke-width="0.12" textLength="15.5" lengthAdjust="spacingAndGlyphs">Groups</text>
<text transform="translate(590.80 59.00) rotate(0.03)" font-size="5.0" fill="#c3c9d3" stroke="#c3c9d3" stroke-width="0.12" textLength="15.5" lengthAdjust="spacingAndGlyphs">Utilities</text>
<text transform="translate(629.20 59.00) rotate(0.03)" font-size="5.0" fill="#c3c9d3" stroke="#c3c9d3" stroke-width="0.12" textLength="21.1" lengthAdjust="spacingAndGlyphs">Clipboard</text>
<text transform="translate(660.80 59.00) rotate(0.03)" font-size="5.0" fill="#c3c9d3" stroke="#c3c9d3" stroke-width="0.12" textLength="10.0" lengthAdjust="spacingAndGlyphs">View</text>
<text transform="translate(679.30 58.92) rotate(0.03)" font-size="4.5" fill="#aab0bb" stroke="#aab0bb" stroke-width="0.12">»</text>
<text transform="translate(5.00 43.60) rotate(0.03)" font-size="5.0" fill="#e2e5ea" stroke="#e2e5ea" stroke-width="0.12" textLength="8.7" lengthAdjust="spacingAndGlyphs">Line</text>
<text transform="translate(18.00 43.60) rotate(0.03)" font-size="5.0" fill="#e2e5ea" stroke="#e2e5ea" stroke-width="0.12" textLength="17.3" lengthAdjust="spacingAndGlyphs">Polyline</text>
<text transform="translate(41.30 43.60) rotate(0.03)" font-size="5.0" fill="#e2e5ea" stroke="#e2e5ea" stroke-width="0.12" textLength="11.7" lengthAdjust="spacingAndGlyphs">Circle</text>
<text transform="translate(62.20 43.60) rotate(0.03)" font-size="5.0" fill="#e2e5ea" stroke="#e2e5ea" stroke-width="0.12" textLength="7.0" lengthAdjust="spacingAndGlyphs">Arc</text>
<text transform="translate(103.30 29.80) rotate(0.03)" font-size="5.0" fill="#e2e5ea" stroke="#e2e5ea" stroke-width="0.12" textLength="12.0" lengthAdjust="spacingAndGlyphs">Move</text>
<text transform="translate(103.30 39.80) rotate(0.03)" font-size="5.0" fill="#e2e5ea" stroke="#e2e5ea" stroke-width="0.12" textLength="11.7" lengthAdjust="spacingAndGlyphs">Copy</text>
<text transform="translate(103.30 49.20) rotate(0.03)" font-size="5.0" fill="#e2e5ea" stroke="#e2e5ea" stroke-width="0.12" textLength="14.7" lengthAdjust="spacingAndGlyphs">Stretch</text>
<text transform="translate(132.80 29.80) rotate(0.03)" font-size="5.0" fill="#e2e5ea" stroke="#e2e5ea" stroke-width="0.12" textLength="13.5" lengthAdjust="spacingAndGlyphs">Rotate</text>
<text transform="translate(132.80 39.80) rotate(0.03)" font-size="5.0" fill="#e2e5ea" stroke="#e2e5ea" stroke-width="0.12" textLength="13.0" lengthAdjust="spacingAndGlyphs">Mirror</text>
<text transform="translate(132.80 49.20) rotate(0.03)" font-size="5.0" fill="#e2e5ea" stroke="#e2e5ea" stroke-width="0.12" textLength="10.5" lengthAdjust="spacingAndGlyphs">Scale</text>
<text transform="translate(160.80 29.80) rotate(0.03)" font-size="5.0" fill="#e2e5ea" stroke="#e2e5ea" stroke-width="0.12" textLength="8.9" lengthAdjust="spacingAndGlyphs">Trim</text>
<text transform="translate(160.80 39.80) rotate(0.03)" font-size="5.0" fill="#e2e5ea" stroke="#e2e5ea" stroke-width="0.12" textLength="9.7" lengthAdjust="spacingAndGlyphs">Fillet</text>
<text transform="translate(160.80 49.20) rotate(0.03)" font-size="5.0" fill="#e2e5ea" stroke="#e2e5ea" stroke-width="0.12" textLength="10.9" lengthAdjust="spacingAndGlyphs">Array</text>
<text transform="translate(197.30 36.36) rotate(0.03)" font-size="16" fill="#eef0f4" stroke="#eef0f4" stroke-width="0.12">A</text>
<text transform="translate(199.70 43.60) rotate(0.03)" font-size="5.0" fill="#e2e5ea" stroke="#e2e5ea" stroke-width="0.12" textLength="7.3" lengthAdjust="spacingAndGlyphs">Text</text>
<text transform="translate(212.80 43.60) rotate(0.03)" font-size="5.0" fill="#e2e5ea" stroke="#e2e5ea" stroke-width="0.12" textLength="23.0" lengthAdjust="spacingAndGlyphs">Dimension</text>
<text transform="translate(248.00 29.80) rotate(0.03)" font-size="5.0" fill="#e2e5ea" stroke="#e2e5ea" stroke-width="0.12" textLength="13.2" lengthAdjust="spacingAndGlyphs">Linear</text>
<text transform="translate(248.00 39.80) rotate(0.03)" font-size="5.0" fill="#e2e5ea" stroke="#e2e5ea" stroke-width="0.12" textLength="14.4" lengthAdjust="spacingAndGlyphs">Leader</text>
<text transform="translate(248.00 49.20) rotate(0.03)" font-size="5.0" fill="#e2e5ea" stroke="#e2e5ea" stroke-width="0.12" textLength="11" lengthAdjust="spacingAndGlyphs">Table</text>
<text transform="translate(278.00 43.80) rotate(0.03)" font-size="5.0" fill="#e2e5ea" stroke="#e2e5ea" stroke-width="0.12" textLength="10.7" lengthAdjust="spacingAndGlyphs">Layer</text>
<text transform="translate(271.70 49.80) rotate(0.03)" font-size="5.0" fill="#e2e5ea" stroke="#e2e5ea" stroke-width="0.12" textLength="22.5" lengthAdjust="spacingAndGlyphs">Properties</text>
<text transform="translate(336.60 29.94) rotate(0.03)" font-size="5.1" fill="#e2e5ea" stroke="#e2e5ea" stroke-width="0.12">0</text>
<text transform="translate(344.70 39.80) rotate(0.03)" font-size="5.0" fill="#e2e5ea" stroke="#e2e5ea" stroke-width="0.12" textLength="29.1" lengthAdjust="spacingAndGlyphs">Make Current</text>
<text transform="translate(344.70 49.20) rotate(0.03)" font-size="5.0" fill="#e2e5ea" stroke="#e2e5ea" stroke-width="0.12" textLength="26.1" lengthAdjust="spacingAndGlyphs">Match Layer</text>
<text transform="translate(383.80 43.80) rotate(0.03)" font-size="5.0" fill="#e2e5ea" stroke="#e2e5ea" stroke-width="0.12" textLength="11.5" lengthAdjust="spacingAndGlyphs">Insert</text>
<text transform="translate(408.00 29.80) rotate(0.03)" font-size="5.0" fill="#e2e5ea" stroke="#e2e5ea" stroke-width="0.12" textLength="13.7" lengthAdjust="spacingAndGlyphs">Create</text>
<text transform="translate(408.00 39.80) rotate(0.03)" font-size="5.0" fill="#e2e5ea" stroke="#e2e5ea" stroke-width="0.12" textLength="7.8" lengthAdjust="spacingAndGlyphs">Edit</text>
<text transform="translate(408.00 49.20) rotate(0.03)" font-size="5.0" fill="#e2e5ea" stroke="#e2e5ea" stroke-width="0.12" textLength="30.3" lengthAdjust="spacingAndGlyphs">Edit Attributes</text>
<text transform="translate(452.50 43.80) rotate(0.03)" font-size="5.0" fill="#e2e5ea" stroke="#e2e5ea" stroke-width="0.12" textLength="13.3" lengthAdjust="spacingAndGlyphs">Match</text>
<text transform="translate(448.70 49.80) rotate(0.03)" font-size="5.0" fill="#e2e5ea" stroke="#e2e5ea" stroke-width="0.12" textLength="21.3" lengthAdjust="spacingAndGlyphs">Properties</text>
<text transform="translate(490.80 29.90) rotate(0.03)" font-size="5.0" fill="#e2e5ea" stroke="#e2e5ea" stroke-width="0.12" textLength="16.7" lengthAdjust="spacingAndGlyphs">ByLayer</text>
<text transform="translate(509.70 39.90) rotate(0.03)" font-size="5.0" fill="#e2e5ea" stroke="#e2e5ea" stroke-width="0.12" textLength="16.7" lengthAdjust="spacingAndGlyphs">ByLayer</text>
<text transform="translate(509.70 49.70) rotate(0.03)" font-size="5.0" fill="#e2e5ea" stroke="#e2e5ea" stroke-width="0.12" textLength="16.7" lengthAdjust="spacingAndGlyphs">ByLayer</text>
<text transform="translate(556.30 43.80) rotate(0.03)" font-size="5.0" fill="#e2e5ea" stroke="#e2e5ea" stroke-width="0.12" textLength="13.2" lengthAdjust="spacingAndGlyphs">Group</text>
<text transform="translate(587.50 43.80) rotate(0.03)" font-size="5.0" fill="#e2e5ea" stroke="#e2e5ea" stroke-width="0.12" textLength="18.3" lengthAdjust="spacingAndGlyphs">Measure</text>
<text transform="translate(629.20 43.80) rotate(0.03)" font-size="5.0" fill="#e2e5ea" stroke="#e2e5ea" stroke-width="0.12" textLength="9.1" lengthAdjust="spacingAndGlyphs">Paste</text>
<text transform="translate(666.20 43.80) rotate(0.03)" font-size="5.0" fill="#e2e5ea" stroke="#e2e5ea" stroke-width="0.12" textLength="9.6" lengthAdjust="spacingAndGlyphs">Base</text>
<text transform="translate(23.80 69.60) rotate(0.03)" font-size="5.0" fill="#d0d5dc" stroke="#d0d5dc" stroke-width="0.12" textLength="9.0" lengthAdjust="spacingAndGlyphs">Start</text>
<text transform="translate(43.00 69.60) rotate(0.03)" font-size="5.0" fill="#d0d5dc" stroke="#d0d5dc" stroke-width="0.12" textLength="31.5" lengthAdjust="spacingAndGlyphs">yuvarlak yatak*</text>
<text transform="translate(90.00 69.60) rotate(0.03)" font-size="5.0" fill="#d0d5dc" stroke="#d0d5dc" stroke-width="0.12" textLength="56.7" lengthAdjust="spacingAndGlyphs">yatak odası (Pislik Mimar)*</text>
<text transform="translate(161.70 69.60) rotate(0.03)" font-size="5.0" fill="#fff" stroke="#fff" stroke-width="0.12" font-weight="bold" textLength="60.8" lengthAdjust="spacingAndGlyphs">masaj yatağı (pislik mimar)*</text>
<text transform="translate(23.80 418.00) rotate(0.03)" font-size="5.0" fill="#d0d5dc" stroke="#d0d5dc" stroke-width="0.12" textLength="13.2" lengthAdjust="spacingAndGlyphs">Model</text>
<text transform="translate(47.20 418.00) rotate(0.03)" font-size="5.0" fill="#fff" stroke="#fff" stroke-width="0.12" font-weight="bold" textLength="17.5" lengthAdjust="spacingAndGlyphs">Layout1</text>
<text transform="translate(582.90 418.26) rotate(0.03)" font-size="4.9" fill="#eef0f4" stroke="#eef0f4" stroke-width="0.12" font-weight="bold" textLength="13.4" lengthAdjust="spacingAndGlyphs">PAPER</text>
<text transform="translate(35.80 433.43) rotate(0.03)" font-size="6.2" fill="#2a2a2a" stroke="#2a2a2a" stroke-width="0.12" textLength="9.2" lengthAdjust="spacingAndGlyphs">Ara</text>
<text transform="translate(165.60 432.56) rotate(0.03)" font-size="6" fill="#fff" stroke="#fff" stroke-width="0.12" font-weight="bold">A</text>
<text transform="translate(739.30 428.56) rotate(0.03)" font-size="4.6" fill="#f4f5f7" stroke="#f4f5f7" stroke-width="0.12" textLength="11.7" lengthAdjust="spacingAndGlyphs">23:57</text>
<text transform="translate(734.80 435.36) rotate(0.03)" font-size="4.6" fill="#f4f5f7" stroke="#f4f5f7" stroke-width="0.12" textLength="21.2" lengthAdjust="spacingAndGlyphs">14.04.2026</text>
<text transform="translate(421.40 169.58) rotate(0.03)" font-size="6.9" fill="#222" stroke="#222" stroke-width="0.12" textLength="31.6" lengthAdjust="spacingAndGlyphs">Side view</text>
<text transform="translate(284.00 338.58) rotate(0.03)" font-size="6.9" fill="#222" stroke="#222" stroke-width="0.12" textLength="34.3" lengthAdjust="spacingAndGlyphs">Front view</text>
<text font-size="19.500" font-style="italic" fill="#2a8ae0" letter-spacing="1.450" word-spacing="-4.500"><textPath href="#lp"><tspan font-size="24" fill="#3a9ae8">P</tspan>islik <tspan fill="#1f6fd0">Mimar</tspan></textPath></text>
<text x="53.600" y="351.900" font-size="10.600" font-weight="bold" fill="#111" stroke="#111" stroke-width="0.250" textLength="26.200" lengthAdjust="spacingAndGlyphs">.dwg</text>
<text x="21.300" y="385.900" font-size="12.400" font-weight="bold" fill="#fff" stroke="#fff" stroke-width="0.350" textLength="55.500" lengthAdjust="spacingAndGlyphs">DOWNLOAD</text>
</svg>
</body></html>
